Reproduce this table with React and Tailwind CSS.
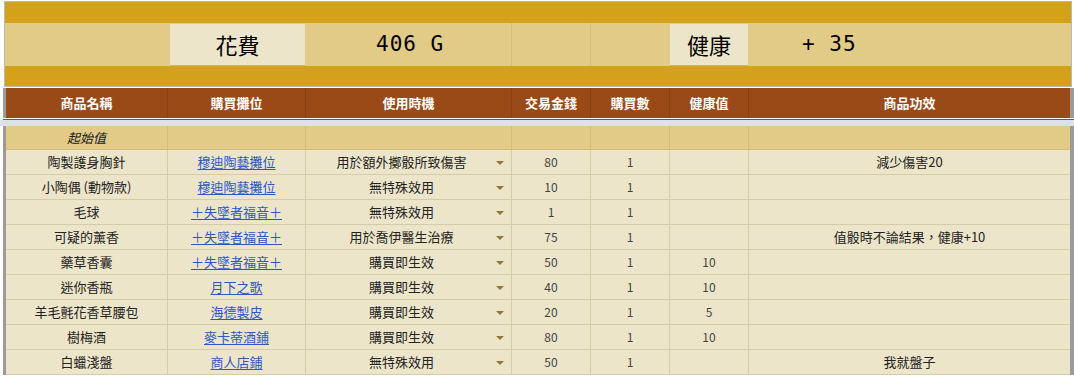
import React from 'react';

const COLS = 'grid grid-cols-[162px_138px_206px_79px_79px_79px_1fr]';

const rows = [
  ['陶製護身胸針', '穆迪陶藝攤位', '用於額外擲骰所致傷害', '80', '1', '', '減少傷害20'],
  ['小陶偶 (動物款)', '穆迪陶藝攤位', '無特殊效用', '10', '1', '', ''],
  ['毛球', '＋失墜者福音＋', '無特殊效用', '1', '1', '', ''],
  ['可疑的薰香', '＋失墜者福音＋', '用於喬伊醫生治療', '75', '1', '', '值骰時不論結果，健康+10'],
  ['藥草香囊', '＋失墜者福音＋', '購買即生效', '50', '1', '10', ''],
  ['迷你香瓶', '月下之歌', '購買即生效', '40', '1', '10', ''],
  ['羊毛氈花香草腰包', '海德製皮', '購買即生效', '20', '1', '5', ''],
  ['樹梅酒', '麥卡蒂酒鋪', '購買即生效', '80', '1', '10', ''],
  ['白蠟淺盤', '商人店鋪', '無特殊效用', '50', '1', '', '我就盤子'],
];

const headers = ['商品名稱', '購買攤位', '使用時機', '交易金錢', '購買數', '健康值', '商品功效'];

const Cell = ({ children, className = '' }) => (
  <div className={`flex items-center justify-center border-r border-b border-[#d6cba8] ${className}`}>
    {children}
  </div>
);

const App = () => {
  return (
    <div
      className="w-[1074px] h-[376px] overflow-hidden bg-white text-[#222]"
      style={{ fontFamily: '"Noto Sans CJK TC", "Noto Sans", sans-serif' }}
    >
      {/* summary */}
      <div className="ml-[4px] mt-[1px] w-[1068px] border border-[#b9b9b9] bg-[#d3a21a] pt-[1px]">
        <div className="h-[20px]" />
        <div className="grid grid-cols-[165px_135px_207px_79px_79px_78px_1fr] h-[43px] bg-[#e2cb87]">
          <div />
          <div className="mt-[1px] flex items-center justify-center bg-[#ede5c9] border-b border-[#c9b37a] text-[22px] text-black">
            花費
          </div>
          <div
            className="flex items-center pl-[71px] text-[21px] tracking-[1px] text-black border-r border-[#d5bd7c]"
            style={{ fontFamily: '"DejaVu Sans Mono", monospace' }}
          >
            406 G
          </div>
          <div className="border-r border-[#d5bd7c]" />
          <div />
          <div className="mt-[1px] flex items-center justify-center bg-[#ede5c9] border-b border-[#c9b37a] text-[22px] text-black">
            健康
          </div>
          <div
            className="flex items-center pl-[54px] text-[21px] tracking-[1px] text-black"
            style={{ fontFamily: '"DejaVu Sans Mono", monospace' }}
          >
            + 35
          </div>
        </div>
        <div className="h-[20px]" />
      </div>

      {/* header */}
      <div className="mt-[1px] ml-[3px] border-l-[3px] border-r-[4px] border-[#9b9b9b]">
        <div className={`${COLS} h-[30px] bg-[#9a4a17]`}>
          {headers.map((h, i) => (
            <div
              key={h}
              className={`flex items-center justify-center text-[13px] font-bold text-white ${i < 6 ? 'border-r border-[#86401a]' : ''}`}
            >
              {h}
            </div>
          ))}
        </div>
      </div>
      <div className="ml-[6px] w-[1064px] h-[1px] bg-white" />
      <div className="ml-[3px] h-[1px] bg-[#9a4a17]" />
      <div className="h-[6px] bg-[#dde2e8]" />

      {/* body */}
      <div className="ml-[3px] border-l-[3px] border-r-[4px] border-[#9b9b9b] bg-[#ede5c9] text-[13px]">
        <div className={`${COLS} h-[24px] bg-[#e2cb87]`}>
          <div className="flex items-center justify-center border-r border-b border-[#d3bd7e] italic">
            起始值
          </div>
          {[0, 1, 2, 3, 4].map((i) => (
            <div key={i} className="border-r border-b border-[#d3bd7e]" />
          ))}
          <div className="border-b border-[#d3bd7e]" />
        </div>
        {rows.map((r) => (
          <div key={r[0]} className={`${COLS} h-[25px]`}>
            <Cell>{r[0]}</Cell>
            <Cell>
              <a href="#" className="text-[#2a58c9] underline underline-offset-2">
                {r[1]}
              </a>
            </Cell>
            <Cell className="relative">
              <span className="pr-[14px]">{r[2]}</span>
              <span className="absolute right-[7px] top-[11px] w-0 h-0 border-l-[4px] border-r-[4px] border-t-[4px] border-l-transparent border-r-transparent border-t-[#8c7838]" />
            </Cell>
            <Cell className="text-[12px] text-[#444]">{r[3]}</Cell>
            <Cell className="text-[12px] text-[#444]">{r[4]}</Cell>
            <Cell className="text-[12px] text-[#444]">{r[5]}</Cell>
            <div className="flex items-center justify-center border-b border-[#d6cba8]">{r[6]}</div>
          </div>
        ))}
      </div>
    </div>
  );
};

export default App;
